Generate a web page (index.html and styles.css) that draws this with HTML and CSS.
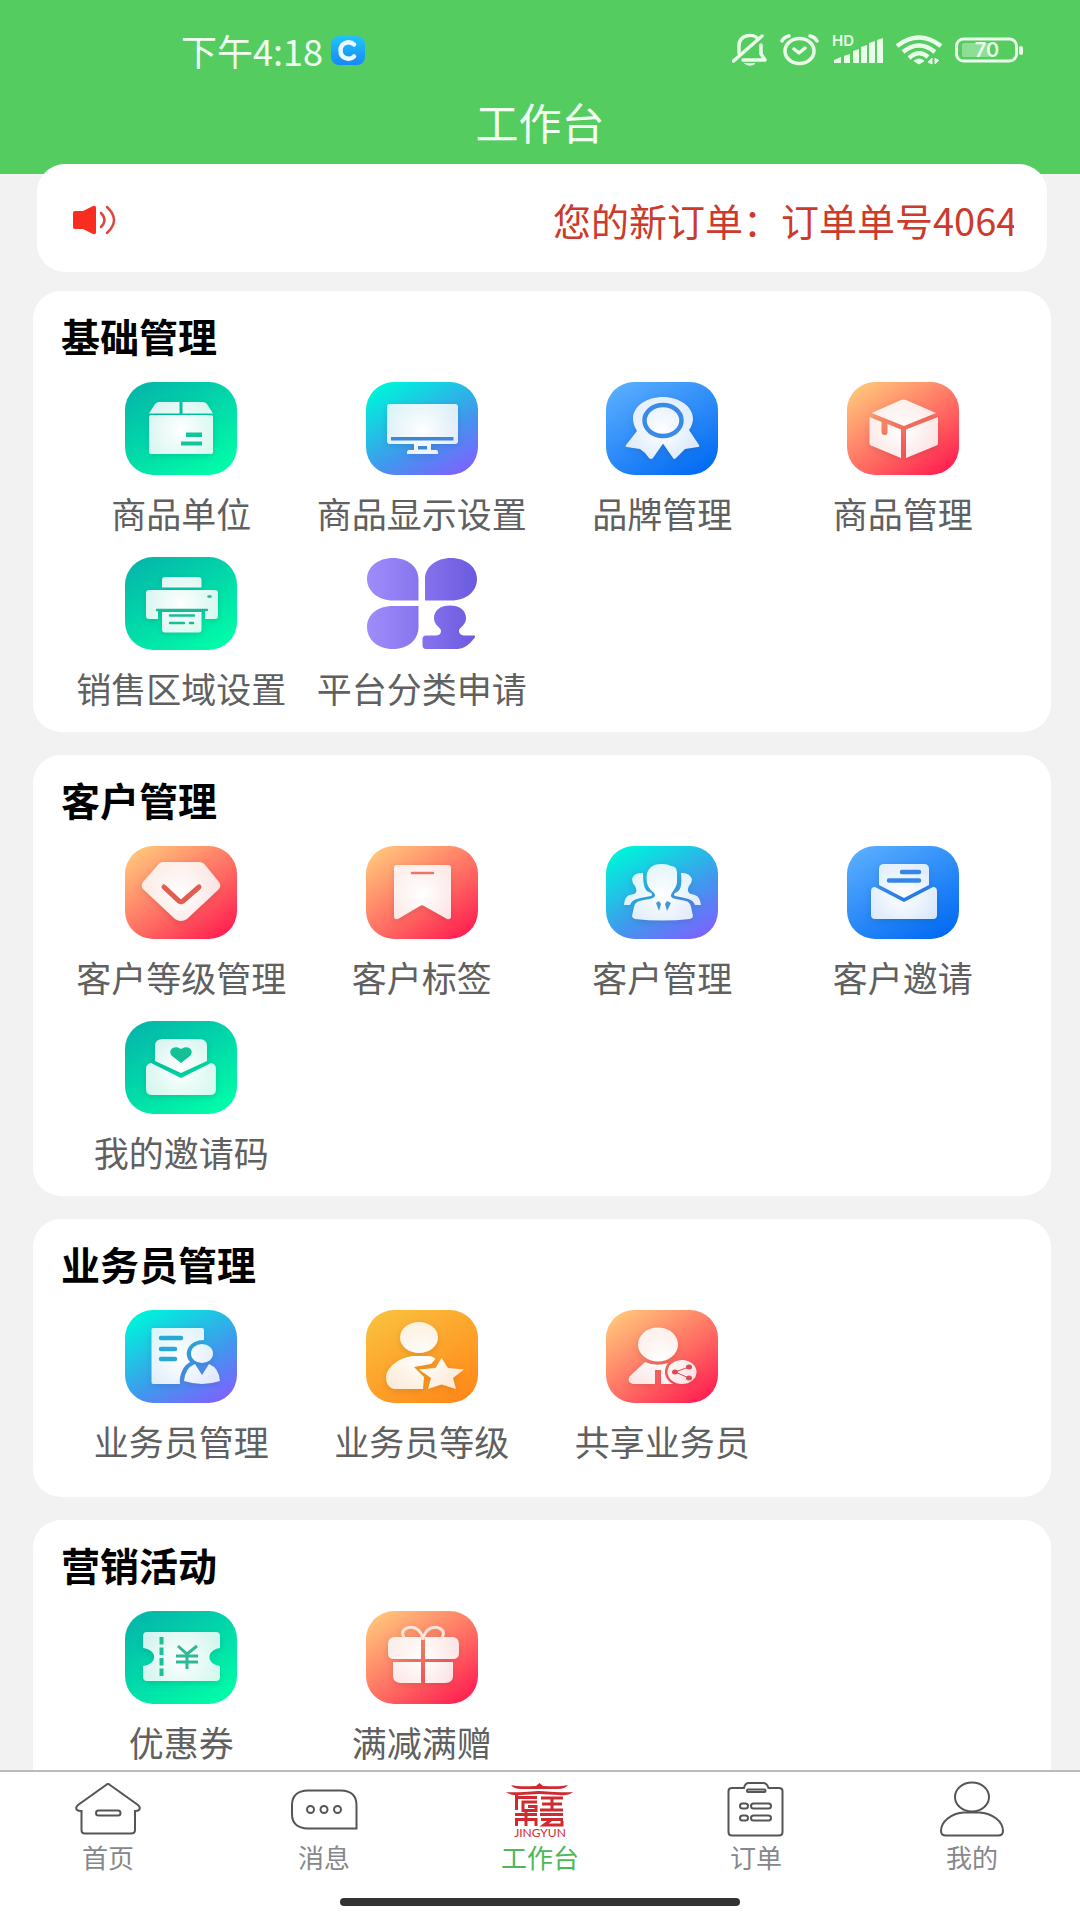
FILE: index.html
```html
<!DOCTYPE html>
<html lang="zh-CN">
  <head>
    <meta charset="utf-8">
    <meta name="viewport" content="width=device-width, initial-scale=1">
    <title>工作台</title>
    <link rel="stylesheet" href="styles.css">
  </head>
  <body>

    <!-- shared gradients -->
    <svg class="defs" width="0" height="0" aria-hidden="true">
      <defs>
        <radialGradient id="glow" gradientUnits="userSpaceOnUse" cx="56" cy="48" r="42">
          <stop offset="0" stop-color="#fff"/>
          <stop offset="1" stop-color="#fff" stop-opacity=".82"/>
        </radialGradient>
        <linearGradient id="purple" gradientUnits="userSpaceOnUse" x1="0" y1="0" x2="112" y2="0">
          <stop offset="0" stop-color="#a08dfb"/>
          <stop offset="1" stop-color="#6b59df"/>
        </linearGradient>
        <linearGradient id="badge" x1="0" y1="0" x2="0" y2="1">
          <stop offset="0" stop-color="#20c5f5"/>
          <stop offset="1" stop-color="#1688f8"/>
        </linearGradient>
      </defs>
    </svg>

    <header class="header">
      <div class="status">
        <div class="status-left">
          <span>下午4:18</span>
          <svg width="34" height="29" viewBox="0 0 34 29">
            <rect width="34" height="29" rx="8" fill="url(#badge)"/>
            <path d="M23 8.500C19 4.500 9.500 6 9.500 14.500S19 24.500 23 20.500" fill="none" stroke="#eafaff" stroke-width="4.500" stroke-linecap="round"/>
          </svg>
        </div>
        <div class="status-right">
          <svg width="35" height="34" viewBox="0 0 35 34" fill="none" stroke="#e9fbe9" stroke-width="3.500" stroke-linecap="round" stroke-linejoin="round">
            <path d="M7 20V13C7 1 22 0 26 6M29 12V21L33 27H11M1.500 28L30 3"/>
            <path d="M13 30.500H23Q18 34 13 30.500Z" fill="#e9fbe9" stroke-width="1"/>
          </svg>
          <svg width="39" height="34" viewBox="0 0 39 34" fill="none" stroke="#e9fbe9" stroke-width="3.500" stroke-linecap="round" stroke-linejoin="round">
            <ellipse cx="19.500" cy="18" rx="14.500" ry="12.500"/>
            <path d="M14 16L19 20L25 15M2 8Q4 4 9 3M37 8Q35 4 30 3"/>
          </svg>
          <svg class="signal" width="51" height="34" viewBox="0 0 51 34" fill="#e9fbe9">
            <text x="0" y="13">HD</text>
            <path d="M2 30V27L9 24V30ZM12 23L18 21V30H12ZM21 18L27 16V30H21ZM29 14L35 12V30H29ZM37 10L43 8V30H37ZM45 7L51 5V30H45Z"/>
          </svg>
          <svg width="46" height="34" viewBox="0 0 46 34" fill="none" stroke="#e9fbe9" stroke-width="4.500">
            <path d="M1 13Q23 -4 45 13M7 19Q23 6 39 19M13 25Q23 16 32 24"/>
            <path d="M18 28Q23 24 28 28L23 31ZM32 29L36 25V31ZM39 25V31L43 27" fill="#e9fbe9" stroke-width="1"/>
          </svg>
          <svg class="battery" width="69" height="34" viewBox="0 0 69 34">
            <rect x="1.500" y="6" width="60" height="22" rx="7" fill="none" stroke="#e9fbe9" stroke-width="3"/>
            <rect x="7" y="10" width="28" height="14" rx="2" fill="#8edf95"/>
            <rect x="64" y="13" width="4" height="9" rx="2" fill="#e9fbe9"/>
            <text x="32" y="24" text-anchor="middle" fill="#e9fbe9">70</text>
          </svg>
        </div>
      </div>
      <h1 class="header-title">工作台</h1>
    </header>

    <div class="notice">
      <svg class="notice-icon" width="44" height="32" viewBox="0 0 44 32">
        <path d="M0 9Q0 7 2 7H10L20 2Q23 1 23 4V28Q23 31 20 30L10 25H2Q0 25 0 23Z" fill="#f92c20"/>
        <path d="M28 9Q35 16 28 23M34 3Q48 16 34 29" fill="none" stroke="#e0473c" stroke-width="2.500" stroke-linecap="round"/>
      </svg>
      <div class="notice-text">您的新订单：订单单号4064</div>
    </div>

    <main class="content">
      <section class="card">
        <h2 class="card-title">基础管理</h2>
        <div class="grid">
          <a class="item" href="#">
            <span class="tile tile-green">
              <svg viewBox="0 0 112 93" fill="url(#glow)">
                <path d="M24 31.500L30 22Q32 20 34 20H54.500V31.500ZM57.500 20H78Q80 20 82 22L88 31.500H57.500Z"/>
                <rect x="24" y="33" width="64" height="39" rx="2"/>
                <path d="M61 50.500H77V55H61ZM56 59.500H77V63.500H56Z" fill="#10c69a"/>
              </svg>
            </span>
            <span class="label">商品单位</span>
          </a>
          <a class="item" href="#">
            <span class="tile tile-cyan">
              <svg viewBox="0 0 112 93" fill="url(#glow)">
                <path fill-rule="evenodd" d="M24 22H89Q92 22 92 25V59Q92 62 89 62H65V68H70Q72 68 72 70V72H41V70Q41 68 43 68H48V62H24Q21 62 21 59V25Q21 22 24 22ZM52 64V67.500H61V64Z"/>
                <path d="M25 55H87.500V58.500H25Z" fill="#3f86d6"/>
              </svg>
            </span>
            <span class="label">商品显示设置</span>
          </a>
          <a class="item" href="#">
            <span class="tile tile-blue">
              <svg viewBox="0 0 112 93" fill="url(#glow)">
                <path d="M31 49C19 30 36 15 57 15S95 31 83 48L93 63Q94 65 92 65L79 67L70 76Q68 78 67 76L58 63Q57 61 56 63L47 76Q45 78 43 76Q39 70 34 67L21 65Q19 65 20 63Z"/>
                <ellipse cx="57" cy="38.500" rx="18.500" ry="15.500" fill="none" stroke="#3b8be6" stroke-width="4.500"/>
              </svg>
            </span>
            <span class="label">品牌管理</span>
          </a>
          <a class="item" href="#">
            <span class="tile tile-red">
              <svg viewBox="0 0 112 93" fill="url(#glow)">
                <path d="M24.500 31L54 18Q56.500 17 59 18L89 31L57 44Z"/>
                <path d="M22.500 35L34.500 40V50Q34.500 53 38 53Q40.500 53 40.500 50V42L54 47.500V76L24 63.500Q22.500 63 22.500 61ZM59 47.500L91 35V61Q91 63 89.500 63.500L59 76Z"/>
              </svg>
            </span>
            <span class="label">商品管理</span>
          </a>
          <a class="item" href="#">
            <span class="tile tile-green">
              <svg viewBox="0 0 112 93" fill="url(#glow)">
                <path d="M37 30.500V23Q37 20 40 20H73.500Q76.500 20 76.500 23V30.500Z"/>
                <path d="M24 33H90Q93 33 93 36V59Q93 62 90 62H80V54H33V62H24Q21 62 21 59V36Q21 33 24 33Z"/>
                <path d="M37 55H76.500V72.500Q76.500 75.500 73.500 75.500H40Q37 75.500 37 72.500Z"/>
                <path d="M32 53H82M45 58.500H69M45 66H59M65 66H68M83.500 39.500H85.500" fill="none" stroke="#18bd98" stroke-width="2.500" stroke-linecap="round"/>
              </svg>
            </span>
            <span class="label">销售区域设置</span>
          </a>
          <a class="item" href="#">
            <span class="tile">
              <svg class="flat" viewBox="0 0 112 93" fill="url(#purple)">
                <path d="M52.500 43.500H27C12 43.500 1 34 1 22S12 1 27 1S52.500 10 52.500 22ZM59 43.500V22C59 10 70 1 85 1S111 10 111 22S101 43.500 85 43.500ZM52.500 49V70C52.500 82 43 92 27 92S1 82 1 70S11 49 27 49Z"/>
                <path d="M68 61C68 53 75 48.500 84 48.500S100 53 100 61C100 69 93 70 93 74C93 77 96 78.500 99 78.500H108Q110 79 108.500 81Q100 92 92 92H60Q56.500 92 56.500 88V82Q56.500 78.500 60 78.500H69C73 78.500 75 77 75 74C75 70 68 69 68 61Z"/>
              </svg>
            </span>
            <span class="label">平台分类申请</span>
          </a>
        </div>
      </section>

      <section class="card">
        <h2 class="card-title">客户管理</h2>
        <div class="grid">
          <a class="item" href="#">
            <span class="tile tile-red">
              <svg viewBox="0 0 112 93" fill="url(#glow)">
                <path d="M38 16H74Q78 16 81 20L94 36Q97 40 93 44L62 73Q56 77 50 73L19 44Q15 40 18 36L32 20Q35 16 38 16Z"/>
                <path d="M39 41L54 55Q56 56.500 58 55L74 41" fill="none" stroke="#e25d50" stroke-width="5" stroke-linecap="round"/>
              </svg>
            </span>
            <span class="label">客户等级管理</span>
          </a>
          <a class="item" href="#">
            <span class="tile tile-red">
              <svg viewBox="0 0 112 93" fill="url(#glow)">
                <path d="M31 19H82Q85 19 85 22V70Q85 74 81 73L58 60Q56 58.500 54 60L32 73Q28 74 28 70V22Q28 19 31 19Z"/>
                <path d="M46 27H67" stroke="#e8786a" stroke-width="2.500" stroke-linecap="round"/>
              </svg>
            </span>
            <span class="label">客户标签</span>
          </a>
          <a class="item" href="#">
            <span class="tile tile-cyan">
              <svg viewBox="0 0 112 93" fill="url(#glow)">
                <path d="M56 18Q62 18 65 20Q72 20 71 30L71 37C69 45 65 46 65 50C65 52 69 53 75 54C83 55 84 57 85 61L87 70Q87 72 84 73Q56 76 29 73Q26 72 26 70L28 61C29 57 31 55 38 54C45 53 49 52 49 49C49 46 43 45 41 37Q38 18 56 18Z"/>
                <path d="M37 27Q28 26 26 33Q26 37 29 40C31 44 31 47 28 48C21 49 19 51 18 59H24C26 53 33 52 45 50Q48 48 43 46C39 45 37 40 37 27ZM75 27Q83 26 86 33Q86 37 83 40C81 44 82 47 85 48C92 49 94 52 95 59H89C87 53 80 52 69 50Q66 48 71 46C75 44 76 38 75 27Z"/>
                <path d="M50 57L53 55L55 58L53 65ZM59 58L61 55L65 57L61 65Z" fill="#419bd2"/>
              </svg>
            </span>
            <span class="label">客户管理</span>
          </a>
          <a class="item" href="#">
            <span class="tile tile-blue">
              <svg viewBox="0 0 112 93" fill="url(#glow)">
                <path d="M37 18H77Q82 18 82 23V39L57 52L32 39V23Q32 18 37 18Z"/>
                <path d="M28 41L57 56L86 41Q90 41 90 45V69Q90 73 86 73H28Q24 73 24 69V45Q24 41 28 41Z"/>
                <path d="M55 26H72M42 34.500H72" stroke="#3686e8" stroke-width="4.500" stroke-linecap="round"/>
              </svg>
            </span>
            <span class="label">客户邀请</span>
          </a>
          <a class="item" href="#">
            <span class="tile tile-green">
              <svg viewBox="0 0 112 93" fill="url(#glow)">
                <path d="M38 18H74Q82 18 82 25V40L56 52L30 40V25Q30 18 38 18Z"/>
                <path d="M26 42L56 57L86 42Q91 43 91 48V68Q91 74 85 74H27Q21 74 21 68V48Q21 43 26 42Z"/>
                <path d="M56 42L47 35C42 29 49 23 56 28C63 23 70 29 65 35Z" fill="#14c096"/>
              </svg>
            </span>
            <span class="label">我的邀请码</span>
          </a>
        </div>
      </section>

      <section class="card">
        <h2 class="card-title">业务员管理</h2>
        <div class="grid">
          <a class="item" href="#">
            <span class="tile tile-cyan">
              <svg viewBox="0 0 112 93" fill="url(#glow)">
                <path d="M28 18H77Q79 18 79 20V30C65 30 57 42 65 52C58 56 54 65 55 74H28Q26.500 74 26.500 72V20Q26.500 18 28 18Z"/>
                <ellipse cx="77" cy="43.500" rx="11" ry="9.500"/>
                <path d="M70 54L77 65L84 54Q94 58 95 71Q86 74 77 74T59 71Q60 58 70 54Z"/>
                <path d="M36 28H56M36 39H50M36 49H50" stroke="#2ba6d5" stroke-width="4.500" stroke-linecap="round"/>
              </svg>
            </span>
            <span class="label">业务员管理</span>
          </a>
          <a class="item" href="#">
            <span class="tile tile-orange">
              <svg viewBox="0 0 112 93" fill="url(#glow)">
                <ellipse cx="53" cy="27.500" rx="19" ry="15.500"/>
                <path d="M46 46H62Q67 46 69.500 49L65 54L48 57L58 67L57 79H28Q20 77 20 67C21 56 34 48 46 46Z"/>
                <path d="M75.500 48L82 58L98 59.500L87 68L90 79L75.500 74.500L62 79L65 68L53 59.500L69.500 58Z"/>
              </svg>
            </span>
            <span class="label">业务员等级</span>
          </a>
          <a class="item" href="#">
            <span class="tile tile-red">
              <svg viewBox="0 0 112 93" fill="url(#glow)">
                <ellipse cx="52" cy="34.500" rx="20" ry="17"/>
                <path d="M39 52Q50 57 62 53C57 60 58 69 67 74H55V60H49V74H27Q20 72 24 66Z"/>
                <ellipse cx="76" cy="62" rx="14.500" ry="12"/>
                <path d="M83 57L69 62L83 68" fill="none" stroke="#dc4a52" stroke-width="1"/>
                <path d="M66 62a3 2.500 0 1 0 6 0a3 2.500 0 1 0-6 0M80 57a3 2.500 0 1 0 6 0a3 2.500 0 1 0-6 0M80 68a3 2.500 0 1 0 6 0a3 2.500 0 1 0-6 0" fill="#dc4a52"/>
              </svg>
            </span>
            <span class="label">共享业务员</span>
          </a>
        </div>
      </section>

      <section class="card">
        <h2 class="card-title">营销活动</h2>
        <div class="grid">
          <a class="item" href="#">
            <span class="tile tile-green">
              <svg viewBox="0 0 112 93" fill="url(#glow)">
                <path d="M22 21H91Q95 21 95 25V37C81 39 81 53 95 55V66Q95 70 91 70H22Q18 70 18 66V55C33 53 33 39 18 37V25Q18 21 22 21Z"/>
                <path d="M36.500 26V66" stroke="#1cbf97" stroke-width="4" stroke-dasharray="7.500 3"/>
                <path d="M53 35L62 43L72 35M62 43V58M51 45H73M51 51H73" fill="none" stroke="#2fb797" stroke-width="3"/>
              </svg>
            </span>
            <span class="label">优惠券</span>
          </a>
          <a class="item" href="#">
            <span class="tile tile-red">
              <svg viewBox="0 0 112 93" fill="url(#glow)">
                <path d="M28 26H55V48H28Q22 48 22 42V33Q22 27 28 26ZM59 26H87Q93 27 93 33V42Q93 48 87 48H59ZM27 51H55V72H35Q27 72 27 65ZM59 51H87V65Q87 72 79 72H59Z"/>
                <path d="M38 27C33 18 43 15 49 17C54 19 57 25 57 29C57 25 60 19 65 17C71 15 81 18 76 27" fill="none" stroke="#fde3d8" stroke-width="3"/>
              </svg>
            </span>
            <span class="label">满减满赠</span>
          </a>
        </div>
      </section>
    </main>

    <nav class="tabbar">
      <div class="tabs">
        <a class="tab" href="#">
          <svg width="72" height="60" viewBox="0 0 72 60">
            <path d="M34 6Q36 4 38 6L66 26Q69 29 67 31Q66 32 63 32V51Q63 54.500 59 54.500H13Q9.500 54.500 9.500 51V32Q6 32 5 31Q3 29 6 26Z"/>
            <rect x="24" y="31.500" width="24.500" height="5" rx="2.500"/>
          </svg>
          <span>首页</span>
        </a>
        <a class="tab" href="#">
          <svg width="72" height="60" viewBox="0 0 72 60">
            <path d="M20 11.500H53Q68.500 12 68.500 26V49.500H20Q4 49 4 35V26Q4 12 20 11.500Z"/>
            <circle cx="22.500" cy="30.500" r="3.500"/>
            <circle cx="36" cy="30.500" r="3.500"/>
            <circle cx="49.500" cy="30.500" r="3.500"/>
          </svg>
          <span>消息</span>
        </a>
        <a class="tab tab-active" href="#">
          <svg class="logo" width="72" height="60" viewBox="0 0 72 60">
            <path d="M7 6Q14 8 32 7L35.500 4L39 7Q57 8 64 6Q61 10 54 10H17Q10 10 7 6ZM2 13Q10 14 35 12Q61 14 69 13Q64 17 55 16L35 15L16 16Q7 17 2 13Z"/>
            <path class="logo-line" d="M12.500 16V31M12.500 18.500H33M33 23H19V31.500H32V27.500H24M37 19H59M38 25H58M36 31H59M48 18V31M11 35.500H33M36 35.500H59M12.500 47V40.500H32V47M22 32V47M37 40.500H59M47 41L40 46H58V42"/>
            <text x="36" y="58" text-anchor="middle">JINGYUN</text>
          </svg>
          <span>工作台</span>
        </a>
        <a class="tab" href="#">
          <svg width="72" height="60" viewBox="0 0 72 60">
            <path d="M24 9H12Q8.500 9 8.500 12V53Q8.500 56.500 12 56.500H59Q62.500 56.500 62.500 53V12Q62.500 9 59 9H48.500Q47 4 43 4H29Q25 4 24 9Z"/>
            <rect x="27" y="10.500" width="18.500" height="2.500" rx="1"/>
            <rect x="20" y="24.500" width="8" height="5" rx="2.500"/>
            <rect x="31" y="24.500" width="20" height="5" rx="2.500"/>
            <rect x="20" y="36.500" width="8" height="5" rx="2.500"/>
            <rect x="31" y="36.500" width="20" height="5" rx="2.500"/>
          </svg>
          <span>订单</span>
        </a>
        <a class="tab" href="#">
          <svg width="72" height="60" viewBox="0 0 72 60">
            <ellipse cx="36" cy="18" rx="17" ry="14.500"/>
            <path d="M28 33.500H43C57 34 67 43 67 52Q67 56.500 62 56.500H10Q5 56.500 5 52C5 43 15 34 28 33.500Z"/>
          </svg>
          <span>我的</span>
        </a>
      </div>
      <div class="home-bar"></div>
    </nav>

  </body>
</html>
```
FILE: styles.css
```css
* {
  box-sizing: border-box;
}
html, body {
  padding: 0;
  margin: 0;
}
body {
  display: flex;
  flex-direction: column;
  height: 100vh;
  overflow: hidden;
  background-color: #f2f2f2;
  font-family: "Noto Sans CJK SC", sans-serif;
}
a {
  color: inherit;
  text-decoration: none;
}
svg {
  display: block;
}
.defs {
  position: absolute;
}

.header {
  flex: none;
  padding-bottom: 32px;
  background-color: #54cc60;
  color: #f0fff0;
}
.status {
  display: flex;
  align-items: center;
  justify-content: space-between;
  height: 100px;
  padding: 0 56px 0 181px;
}
.status-left {
  display: flex;
  align-items: center;
  gap: 8px;
  font-size: 36px;
  line-height: 40px;
}
.status-right {
  display: flex;
  align-items: center;
  gap: 13px;
}
.signal text {
  font-family: Inter, sans-serif;
  font-size: 15px;
  font-weight: 600;
}
.battery text {
  font-family: Inter, sans-serif;
  font-size: 20px;
  font-weight: 600;
}
.header-title {
  margin: 0;
  font-size: 43px;
  font-weight: 400;
  line-height: 42px;
  text-align: center;
}

.notice {
  flex: none;
  display: flex;
  align-items: center;
  justify-content: space-between;
  height: 108px;
  margin: -10px 33px 0 37px;
  padding: 4px 33px 0 36px;
  border-radius: 28px;
  background-color: #fff;
}
.notice-text {
  width: 461px;
  overflow: hidden;
  white-space: nowrap;
  color: #cc3a2c;
  font-size: 38px;
  line-height: 56px;
}

.content {
  flex: 1;
  min-height: 0;
  overflow: hidden;
  padding: 19px 29px 0 33px;
}
.card {
  min-height: 278px;
  margin-bottom: 23px;
  padding: 18px 28px 22px;
  border-radius: 28px;
  background-color: #fff;
}
.card-title {
  margin: 0 0 21px;
  color: #000;
  font-size: 39px;
  font-weight: 700;
  line-height: 52px;
}
.grid {
  display: grid;
  grid-template-columns: repeat(4, 1fr);
  row-gap: 22px;
}
.item {
  display: flex;
  flex-direction: column;
  align-items: center;
  gap: 16px;
}
.tile {
  width: 112px;
  height: 93px;
  border-radius: 28px;
}
.tile svg {
  width: 100%;
  height: 100%;
  filter: drop-shadow(0 2px 3px rgba(0, 0, 0, 0.12));
}
.tile .flat {
  filter: none;
}
.tile-green {
  background: linear-gradient(150deg, #04b9aa 10%, #00ffa8 95%);
}
.tile-cyan {
  background: linear-gradient(150deg, #00f0dc 10%, #4296ee 60%, #8060ff 95%);
}
.tile-blue {
  background: linear-gradient(150deg, #5aaeff 5%, #0069f2 95%);
}
.tile-red {
  background: linear-gradient(145deg, #ffc87c 5%, #ff6460 60%, #ff2552 90%);
}
.tile-orange {
  background: linear-gradient(150deg, #fac03e 5%, #ff8a1a 90%);
}
.label {
  color: #606060;
  font-size: 35px;
  line-height: 44px;
  white-space: nowrap;
}

.tabbar {
  flex: none;
  height: 150px;
  padding-top: 7px;
  border-top: 2px solid #bbb;
  background-color: #fff;
}
.tabs {
  display: flex;
}
.tab {
  flex: 1;
  display: flex;
  flex-direction: column;
  align-items: center;
  gap: 2px;
  color: #86878b;
  font-size: 26px;
  line-height: 32px;
}
.tab svg {
  fill: none;
  stroke: #555;
  stroke-width: 2;
}
.tab-active {
  color: #4db85a;
}
.tab .logo {
  fill: #cf2a30;
  stroke: none;
}
.logo-line {
  fill: none;
  stroke: #cf2a30;
  stroke-width: 3;
}
.logo text {
  font-family: Lato, sans-serif;
  font-size: 12px;
}
.home-bar {
  width: 37%;
  height: 8px;
  margin: 25px auto 0;
  border-radius: 4px;
  background-color: #333;
}
```
